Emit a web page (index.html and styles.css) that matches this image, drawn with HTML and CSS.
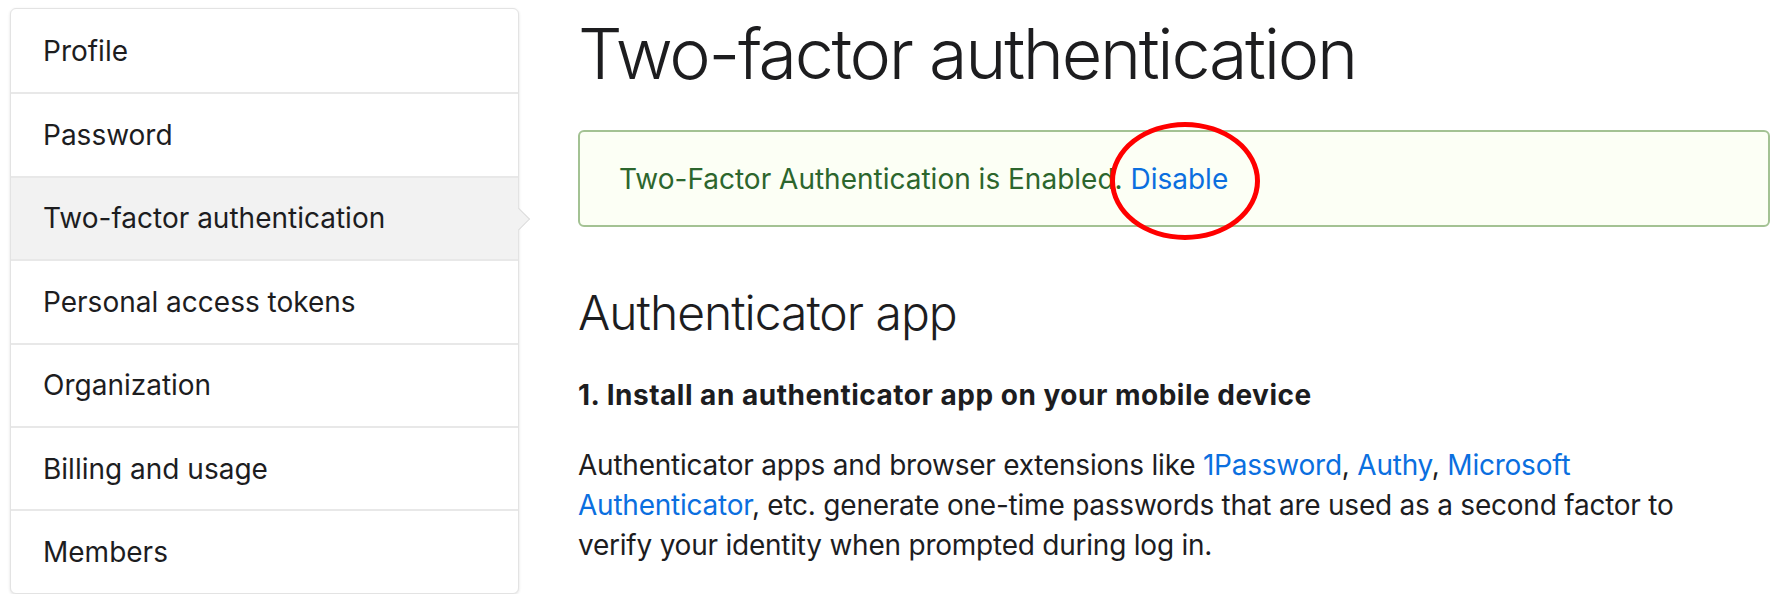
FILE: index.html
```html
<!DOCTYPE html>
<html>
<head>
<meta charset="utf-8">
<link rel="stylesheet" href="styles.css">
</head>
<body>
<div class="page">
  <nav class="sidebar">
    <a class="nav-item">Profile</a>
    <a class="nav-item">Password</a>
    <a class="nav-item active">Two-factor authentication<span class="arrow"></span></a>
    <a class="nav-item">Personal access tokens</a>
    <a class="nav-item">Organization</a>
    <a class="nav-item">Billing and usage</a>
    <a class="nav-item">Members</a>
  </nav>
  <main class="main">
    <h1 class="title">Two-factor authentication</h1>
    <div class="alert">
      <span>Two-Factor Authentication is Enabled. </span><a class="link disable">Disable</a>
      <span class="circle"></span>
    </div>
    <h2 class="subtitle">Authenticator app</h2>
    <h3 class="step">1. Install an authenticator app on your mobile device</h3>
    <p class="text">Authenticator apps and browser extensions like <a class="link">1Password</a>, <a class="link">Authy</a>, <a class="link">Microsoft Authenticator</a>, etc. generate one-time passwords that are used as a second factor to verify your identity when prompted during log in.</p>
  </main>
</div>
</body>
</html>
```
FILE: styles.css
```css
* { box-sizing: border-box; }
html, body { margin: 0; padding: 0; background: #fff; }
body {
  font-family: Inter, "Liberation Sans", sans-serif;
  color: #1d1d1f;
}
.page {
  display: flex;
  align-items: flex-start;
  gap: 59px;
  padding: 8px 10px 0 10px;
}
.sidebar {
  width: 509px;
  flex: none;
  display: flex;
  flex-direction: column;
  border: 1px solid #e3e3e3;
  border-radius: 6px;
  box-shadow: 0 1px 3px rgba(0,0,0,0.12);
  background: #fff;
}
.nav-item {
  position: relative;
  display: flex;
  align-items: center;
  height: 83.4px;
  padding-left: 32px;
  font-size: 28px;
  color: #1d1d1f;
  border-top: 2px solid #e8e8e8;
}
.nav-item:first-child { border-top: none; border-radius: 6px 6px 0 0; }
.nav-item:last-child { border-radius: 0 0 6px 6px; }
.nav-item.active { background: #f2f2f2; }
.arrow {
  position: absolute;
  right: -8.75px;
  top: 50%;
  width: 15.5px;
  height: 15.5px;
  margin-top: -7.75px;
  background: #f2f2f2;
  border-top: 1px solid #dcdcdc;
  border-right: 1px solid #dcdcdc;
  transform: rotate(45deg);
}
.main {
  flex: 1;
  min-width: 0;
  max-width: 1192px;
}
.title {
  margin: 0;
  font-size: 70px;
  font-weight: 300;
  line-height: 92px;
  color: #1d1d1f;
  letter-spacing: -2.3px;
}
.alert {
  position: relative;
  margin-top: 30px;
  height: 97px;
  display: flex;
  align-items: center;
  padding-left: 39px;
  border: 2px solid #a3c293;
  border-radius: 6px;
  background: #fcfff5;
  color: #2c662d;
  font-size: 28px;
  white-space: pre;
}
.link { color: #0b6fdf; text-decoration: none; }
.circle {
  position: absolute;
  left: 530px;
  top: -10px;
  width: 150px;
  height: 118px;
  border: 5px solid #f00;
  border-radius: 50%;
}
.subtitle {
  margin: 56px 0 0 0;
  font-size: 48px;
  font-weight: 300;
  line-height: 60px;
  color: #1d1d1f;
  letter-spacing: -1px;
}
.step {
  margin: 32px 0 0 0;
  font-size: 28px;
  font-weight: 700;
  line-height: 40px;
  letter-spacing: 0.5px;
}
.text {
  margin: 30px 0 0 0;
  max-width: 1150px;
  font-size: 28px;
  line-height: 40px;
  color: #1d1d1f;
  letter-spacing: -0.23px;
}
```
